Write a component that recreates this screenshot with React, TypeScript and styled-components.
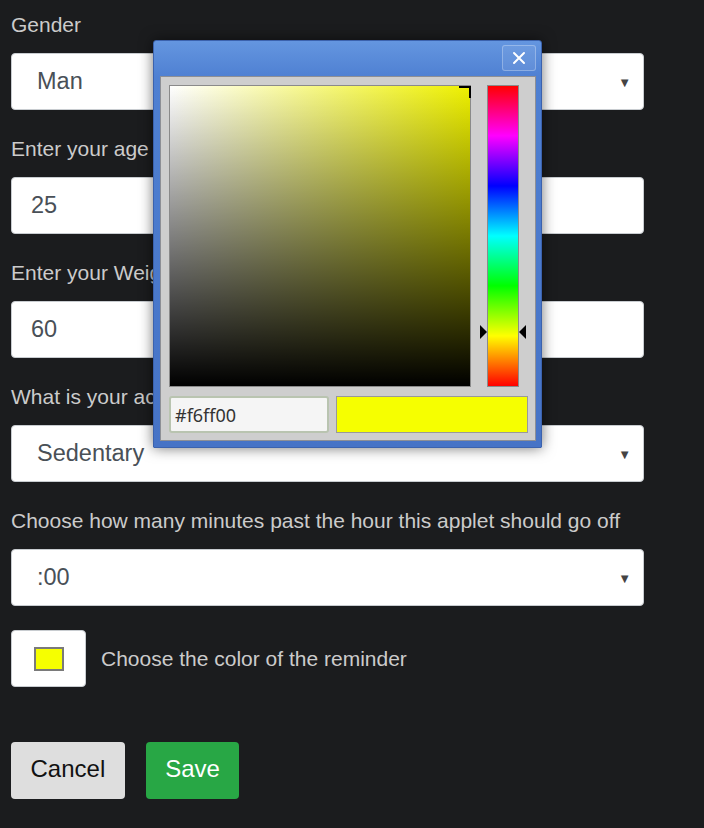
import React, { FC } from 'react';
import styled, { createGlobalStyle } from 'styled-components';

const GlobalStyle = createGlobalStyle`
    html, body {
        margin: 0;
        padding: 0;
        background: #1b1c1e;
    }
    body {
        font-family: 'Liberation Sans', Arial, sans-serif;
    }
`;

const Page = styled.div`
    position: relative;
    min-height: 828px;
    padding: 13px 0 0 11px;
    box-sizing: border-box;
`;

const Form = styled.div`
    width: 633px;
    display: flex;
    flex-direction: column;
`;

const Group = styled.div`
    display: flex;
    flex-direction: column;
    margin-bottom: 27px;
`;

const Label = styled.label`
    font-size: 21px;
    line-height: 24px;
    color: #cbcbcb;
    margin-bottom: 16px;
    white-space: nowrap;
`;

const FieldBox = styled.div`
    height: 57px;
    box-sizing: border-box;
    background: #fff;
    border: 1px solid #c8ccd0;
    border-radius: 4px;
    display: flex;
    align-items: center;
    font-size: 23.5px;
    color: #495057;
`;

const SelectBox = styled(FieldBox)`
    padding: 0 12px 0 25px;
    justify-content: space-between;
`;

const InputBox = styled(FieldBox)`
    padding: 0 19px;
`;

const Arrow = styled.span`
    font-size: 13px;
    color: #444;
    margin-top: 2px;
`;

const ColorRow = styled.div`
    display: flex;
    align-items: center;
    gap: 15px;
    margin-top: -3px;
`;

const ColorButton = styled.div`
    width: 75px;
    height: 57px;
    box-sizing: border-box;
    background: #fff;
    border: 1px solid #c8ccd0;
    border-radius: 4px;
    display: flex;
    align-items: center;
    justify-content: center;
`;

const Swatch = styled.div<{ $color: string }>`
    width: 30px;
    height: 24px;
    box-sizing: border-box;
    background: ${(p) => p.$color};
    border: 2px solid #7a7a7a;
`;

const RowText = styled.span`
    font-size: 21px;
    color: #cbcbcb;
`;

const Buttons = styled.div`
    display: flex;
    gap: 21px;
    margin-top: 55px;
`;

const Button = styled.button<{ $primary?: boolean }>`
    height: 57px;
    padding: 0 19.5px 3px;
    border: none;
    border-radius: 4px;
    font-family: 'Liberation Sans', Arial, sans-serif;
    font-size: 24px;
    background: ${(p) => (p.$primary ? '#28a745' : '#dedede')};
    color: ${(p) => (p.$primary ? '#fff' : '#111')};
`;

/* colour picker dialog, floating over the form */
const Dialog = styled.div`
    position: absolute;
    left: 153px;
    top: 40px;
    width: 389px;
    height: 408px;
    box-sizing: border-box;
    border: 1px solid #3b62ad;
    border-radius: 3px 3px 1px 1px;
    background: linear-gradient(#6496e0 0px, #4f80d2 36px, #4673c6 100%);
    box-shadow: 0 0 14px rgba(0, 0, 0, 0.55);
    display: flex;
    flex-direction: column;
`;

const TitleBar = styled.div`
    height: 35px;
    display: flex;
    justify-content: flex-end;
    align-items: flex-start;
    padding: 4px 5px 0 0;
    box-sizing: border-box;
`;

const CloseButton = styled.div`
    width: 34px;
    height: 26px;
    box-sizing: border-box;
    border: 1px solid rgba(255, 255, 255, 0.28);
    border-radius: 3px;
    background: rgba(255, 255, 255, 0.08);
    display: flex;
    align-items: center;
    justify-content: center;
`;

const DialogBody = styled.div`
    margin: 0 5px 0 6px;
    height: 365px;
    box-sizing: border-box;
    background: #cecece;
    border: 1px solid #8d8f95;
    padding: 8px 0 0 8px;
    display: grid;
    grid-template-columns: 302px 16px 32px 1fr;
    grid-template-rows: 302px 37px;
    row-gap: 9px;
`;

const SVArea = styled.div`
    position: relative;
    box-sizing: border-box;
    border: 1px solid #8a8a8a;
    background: linear-gradient(to top, #000, rgba(0, 0, 0, 0)),
        linear-gradient(to right, #fff, #eef000);
`;

const SVMarker = styled.div`
    position: absolute;
    right: -1px;
    top: 0;
    width: 10px;
    height: 10px;
    border-top: 2px solid #000;
    border-right: 2px solid #000;
`;

const HueBar = styled.div`
    position: relative;
    grid-column: 3;
    box-sizing: border-box;
    border: 1px solid #8a8a8a;
    background: linear-gradient(
        to bottom,
        #ff0000 0%,
        #ff00ff 16.6%,
        #0000ff 33.3%,
        #00ffff 50%,
        #00ff00 66.6%,
        #ffff00 83.3%,
        #ff0000 100%
    );
`;

const HueArrow = styled.div<{ $side: 'left' | 'right' }>`
    position: absolute;
    top: 239px;
    width: 0;
    height: 0;
    border-top: 7px solid transparent;
    border-bottom: 7px solid transparent;
    ${(p) =>
        p.$side === 'left'
            ? 'left: -8px; border-left: 7px solid #000;'
            : 'right: -8px; border-right: 7px solid #000;'}
`;

const BottomRow = styled.div`
    grid-column: 1 / 5;
    display: flex;
    gap: 7px;
`;

const HexInput = styled.div`
    flex: 0 0 160px;
    height: 37px;
    box-sizing: border-box;
    background: #f5f5f5;
    border: 2px solid #b9c4b0;
    border-radius: 3px;
    display: flex;
    align-items: center;
    padding-left: 4px;
    font-family: 'Noto Sans', 'Open Sans', sans-serif;
    font-size: 18px;
    color: #333;
`;

const Preview = styled.div<{ $color: string }>`
    flex: 0 0 192px;
    height: 37px;
    box-sizing: border-box;
    background: ${(p) => p.$color};
    border: 1px solid #999;
`;

const Select: FC<{ value: string }> = ({ value }) => (
    <SelectBox>
        <span>{value}</span>
        <Arrow>▼</Arrow>
    </SelectBox>
);

const App: FC = () => {
    const color = '#f6ff00';
    return (
        <Page>
            <GlobalStyle />
            <Form>
                <Group>
                    <Label>Gender</Label>
                    <Select value="Man" />
                </Group>
                <Group>
                    <Label>Enter your age</Label>
                    <InputBox>25</InputBox>
                </Group>
                <Group>
                    <Label>Enter your Weight</Label>
                    <InputBox>60</InputBox>
                </Group>
                <Group>
                    <Label>What is your activity level</Label>
                    <Select value="Sedentary" />
                </Group>
                <Group>
                    <Label>Choose how many minutes past the hour this applet should go off</Label>
                    <Select value=":00" />
                </Group>
                <ColorRow>
                    <ColorButton>
                        <Swatch $color={color} />
                    </ColorButton>
                    <RowText>Choose the color of the reminder</RowText>
                </ColorRow>
                <Buttons>
                    <Button>Cancel</Button>
                    <Button $primary>Save</Button>
                </Buttons>
            </Form>

            <Dialog>
                <TitleBar>
                    <CloseButton>
                        <svg width="14" height="14" viewBox="0 0 14 14">
                            <path d="M2 2 L12 12 M12 2 L2 12" stroke="#fff" strokeWidth="2" strokeLinecap="round" />
                        </svg>
                    </CloseButton>
                </TitleBar>
                <DialogBody>
                    <SVArea>
                        <SVMarker />
                    </SVArea>
                    <HueBar>
                        <HueArrow $side="left" />
                        <HueArrow $side="right" />
                    </HueBar>
                    <BottomRow>
                        <HexInput>{color}</HexInput>
                        <Preview $color={color} />
                    </BottomRow>
                </DialogBody>
            </Dialog>
        </Page>
    );
};

export default App;
